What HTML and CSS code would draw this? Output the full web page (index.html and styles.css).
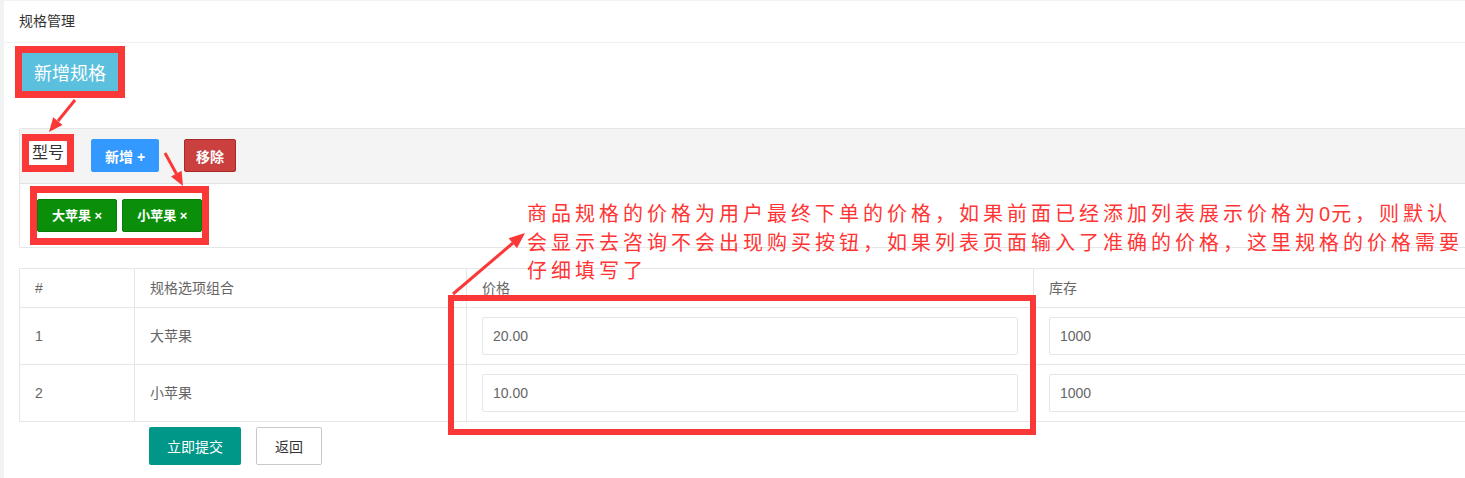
FILE: index.html
```html
<!DOCTYPE html>
<html lang="zh-CN">
<head>
    <meta charset="UTF-8">
    <meta name="viewport" content="width=device-width, initial-scale=1.0">
    <title>规格管理</title>
    <link rel="stylesheet" href="styles.css">
</head>
<body>
    <div class="page">
        <div class="card">
            <div class="card-header">规格管理</div>

            <div class="card-body">
                <!-- Add a new spec group -->
                <button class="btn-add-spec mark">新增规格</button>

                <!-- One spec group with its options -->
                <div class="spec-panel">
                    <div class="spec-head">
                        <span class="spec-name mark">型号</span>
                        <button class="btn btn-blue">新增 +</button>
                        <button class="btn btn-red">移除</button>
                    </div>
                    <div class="spec-body">
                        <div class="tag-list mark">
                            <span class="tag">大苹果 ×</span>
                            <span class="tag">小苹果 ×</span>
                        </div>
                    </div>
                </div>

                <!-- SKU price / stock table -->
                <table class="sku-table">
                    <colgroup>
                        <col class="col-index">
                        <col class="col-name">
                        <col class="col-price">
                        <col class="col-stock">
                    </colgroup>
                    <thead>
                        <tr>
                            <th>#</th>
                            <th>规格选项组合</th>
                            <th>价格</th>
                            <th>库存</th>
                        </tr>
                    </thead>
                    <tbody>
                        <tr>
                            <td>1</td>
                            <td>大苹果</td>
                            <td><input class="input" type="text" value="20.00"></td>
                            <td><input class="input" type="text" value="1000"></td>
                        </tr>
                        <tr>
                            <td>2</td>
                            <td>小苹果</td>
                            <td><input class="input" type="text" value="10.00"></td>
                            <td><input class="input" type="text" value="1000"></td>
                        </tr>
                    </tbody>
                </table>

                <div class="form-actions">
                    <button class="btn-submit">立即提交</button>
                    <button class="btn-back">返回</button>
                </div>
            </div>
        </div>

        <!-- Annotations drawn over the page -->
        <div class="note">商品规格的价格为用户最终下单的价格，如果前面已经添加列表展示价格为<span class="digit">0</span>元，则默认<br>会显示去咨询不会出现购买按钮，如果列表页面输入了准确的价格，这里规格的价格需要<br>仔细填写了</div>
        <div class="price-mark"></div>

        <svg class="arrows" width="1465" height="478" viewBox="0 0 1465 478">
            <line x1="75" y1="100" x2="58" y2="121" />
            <polygon points="49,132 62.5,124.9 53.2,117.3" />
            <line x1="165" y1="153" x2="176.5" y2="174" />
            <polygon points="183,186 181.6,170.8 171,176.6" />
            <line x1="453" y1="294" x2="513" y2="243" />
            <polygon points="525,233 517,248.3 508.6,238.3" />
        </svg>
    </div>
</body>
</html>
```

FILE: styles.css
```css
/* Page frame */
html, body {
    margin: 0;
    overflow: hidden;
}

body {
    background-color: #f2f2f2;
    font-family: "Liberation Sans", "Noto Sans CJK SC", sans-serif;
    color: #333;
}

.page {
    position: relative;
    width: 1465px;
    height: 478px;
    overflow: hidden;
}

/* White card */
.card {
    margin: 1px 0 0 4px;
    width: 1520px;
    background-color: #fff;
    min-height: 520px;
}

.card-header {
    height: 41px;
    line-height: 41px;
    padding-left: 15px;
    font-size: 14px;
    color: #333;
    border-bottom: 1px solid #f0f0f0;
}

.card-body {
    padding: 10px 15px;
}

/* Red frames used for annotations */
.mark {
    outline: 7px solid #fa3838;
}

.btn-add-spec {
    display: block;
    margin-left: 3px;
    height: 38px;
    padding: 0 12px;
    border: none;
    background-color: #5bc0de;
    color: #fff;
    font-family: inherit;
    font-size: 18px;
}

/* Spec group panel */
.spec-panel {
    margin-top: 37px;
    border: 1px solid #e6e6e6;
    border-radius: 2px;
}

.spec-head {
    display: flex;
    align-items: flex-start;
    height: 54px;
    background-color: #f4f4f4;
    border-bottom: 1px solid #e2e2e2;
}

.spec-name {
    margin: 12px 0 0 9px;
    width: 38px;
    height: 24px;
    line-height: 24px;
    text-align: center;
    background-color: #fff;
    font-size: 16px;
    color: #333;
}

.btn {
    margin-top: 10px;
    height: 33px;
    border-radius: 2px;
    color: #fff;
    font-family: inherit;
    font-size: 14px;
    font-weight: bold;
}

.btn-blue {
    margin-left: 24px;
    padding: 0 13px;
    border: 1px solid #3399ff;
    background-color: #3399ff;
}

.btn-red {
    margin-left: 25px;
    padding: 0 11px;
    border: 1px solid #a82828;
    background-color: #c9403f;
}

.spec-body {
    padding: 9px 17px;
}

.tag-list {
    display: inline-flex;
    gap: 5px;
    padding: 6px 0;
    vertical-align: top;
}

.tag {
    height: 33px;
    line-height: 31px;
    padding: 0 14px;
    border: 1px solid #087a08;
    border-radius: 2px;
    background-color: #0b8f0b;
    color: #fff;
    font-size: 13px;
    font-weight: bold;
    box-sizing: border-box;
}

/* SKU table */
.sku-table {
    margin-top: 20px;
    border-collapse: collapse;
    table-layout: fixed;
    width: 1581px;
    font-size: 14px;
    color: #666;
}

.col-index { width: 115px; }
.col-name { width: 332px; }
.col-price { width: 567px; }
.col-stock { width: 567px; }

.sku-table th,
.sku-table td {
    border: 1px solid #e6e6e6;
    padding: 9px 15px;
    line-height: 20px;
    text-align: left;
    font-weight: normal;
}

.input {
    display: block;
    width: 100%;
    height: 38px;
    box-sizing: border-box;
    padding-left: 10px;
    border: 1px solid #e6e6e6;
    border-radius: 2px;
    font-family: inherit;
    font-size: 14px;
    color: #666;
}

/* Form buttons */
.form-actions {
    display: flex;
    gap: 15px;
    margin: 5px 0 0 130px;
}

.btn-submit,
.btn-back {
    height: 38px;
    border-radius: 2px;
    font-family: inherit;
    font-size: 14px;
}

.btn-submit {
    padding: 0 18px;
    border: none;
    background-color: #009688;
    color: #fff;
}

.btn-back {
    padding: 0 18px;
    border: 1px solid #c9c9c9;
    background-color: #fff;
    color: #333;
}

/* Annotation layer */
.note {
    position: absolute;
    left: 527px;
    top: 199px;
    font-family: "Noto Sans CJK SC", sans-serif;
    font-size: 20px;
    line-height: 28px;
    letter-spacing: 4px;
    white-space: nowrap;
    color: #ff3535;
}

.note .digit {
    font-family: "Liberation Sans", sans-serif;
    letter-spacing: 1px;
}

.price-mark {
    position: absolute;
    left: 448px;
    top: 295px;
    width: 576px;
    height: 128px;
    border: 6px solid #fa3838;
}

.arrows {
    position: absolute;
    left: 0;
    top: 0;
    pointer-events: none;
}

.arrows line {
    stroke: #fa3838;
    stroke-width: 3;
}

.arrows polygon {
    fill: #fa3838;
}
```
